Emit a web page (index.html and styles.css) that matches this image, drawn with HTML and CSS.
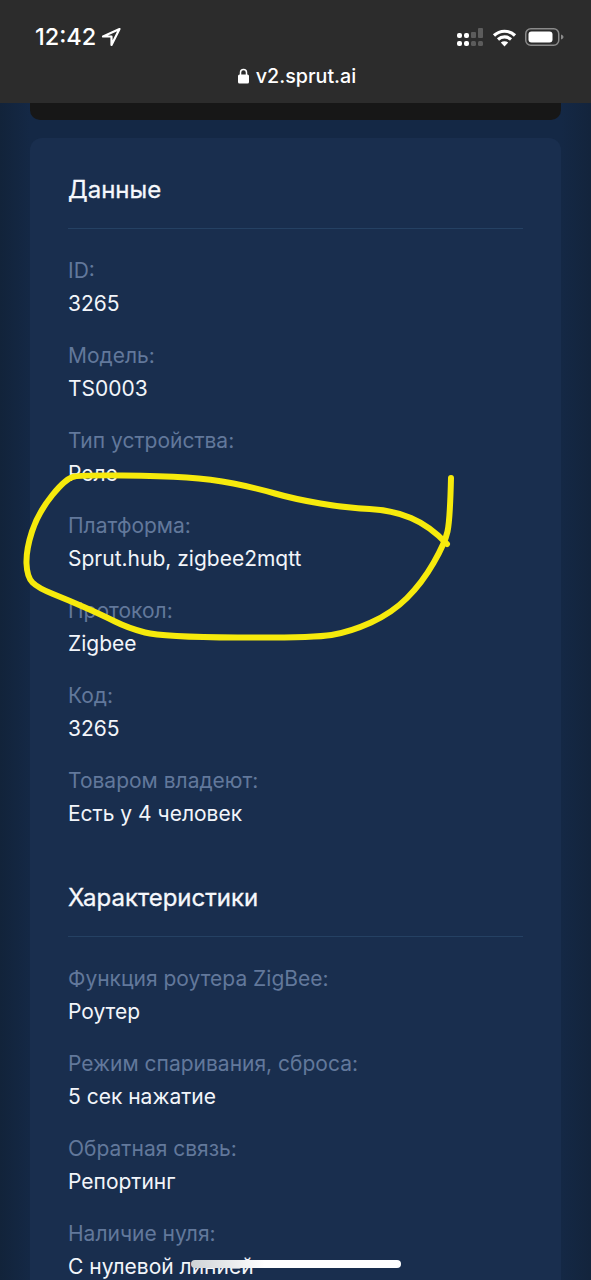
FILE: index.html
```html
<!DOCTYPE html>
<html lang="ru">
<head>
<meta charset="utf-8">
<title>v2.sprut.ai</title>
<link rel="stylesheet" href="styles.css">
</head>
<body>
<header class="chrome">
  <div class="status">
    <div class="clock">
      <span class="time">12:42</span>
      <svg class="arrow" width="20" height="20" viewBox="0 0 20 20"><path d="M18.500 2 2 9.500h8.500V18z" fill="none" stroke="#fff" stroke-width="2.200" stroke-linejoin="round"/></svg>
    </div>
    <div class="indicators">
      <svg width="27" height="20" viewBox="0 0 27 20">
        <g fill="#fff"><rect x="0" y="6" width="5" height="5" rx="2"/><rect x="7" y="6" width="5" height="5" rx="2"/><rect x="0" y="14" width="5" height="5" rx="2"/><rect x="7" y="14" width="5" height="5" rx="2"/></g>
        <g fill="#5c5c5c"><rect x="14" y="5" width="5" height="6" rx="1"/><rect x="21" y="1" width="5" height="10" rx="1"/><rect x="14" y="14" width="5" height="5" rx="1.500"/><rect x="21" y="14" width="5" height="5" rx="1.500"/></g>
      </svg>
      <svg width="25" height="19" viewBox="0 0 25 19">
        <path d="M2 7.500C8 1.800 17 1.800 23 7.500M6 11.500c3.800-3.400 9.200-3.400 13 0" fill="none" stroke="#fff" stroke-width="3.200"/>
        <path d="M8.800 14.500c2.200-1.700 5.200-1.700 7.400 0l-3.700 4z" fill="#fff"/>
      </svg>
      <svg width="39" height="18" viewBox="0 0 39 18">
        <rect x=".75" y=".75" width="33" height="16.500" rx="5" fill="none" stroke="#8a8a8a" stroke-width="1.500"/>
        <rect x="3.500" y="3.500" width="24" height="11" rx="3" fill="#fff"/>
        <path d="M36 6.500c1.500.5 2.500 1.500 2.500 2.500s-1 2-2.500 2.500z" fill="#8a8a8a"/>
      </svg>
    </div>
  </div>
  <div class="address">
    <svg width="11" height="16" viewBox="0 0 11 16"><path d="M2.500 7V4.500a3 3 0 0 1 6 0V7" fill="none" stroke="#fff" stroke-width="1.500"/><rect x="0" y="6.500" width="11" height="9" rx="1.500" fill="#fff"/></svg>
    <span class="url">v2.sprut.ai</span>
  </div>
</header>

<main class="page">
  <div class="media-card"></div>
  <section class="card">
    <h2 class="heading">Данные</h2>
    <dl class="facts">
      <div class="fact"><dt>ID:</dt><dd>3265</dd></div>
      <div class="fact"><dt>Модель:</dt><dd>TS0003</dd></div>
      <div class="fact"><dt>Тип устройства:</dt><dd>Реле</dd></div>
      <div class="fact"><dt>Платформа:</dt><dd>Sprut.hub, zigbee2mqtt</dd></div>
      <div class="fact"><dt>Протокол:</dt><dd>Zigbee</dd></div>
      <div class="fact"><dt>Код:</dt><dd>3265</dd></div>
      <div class="fact"><dt>Товаром владеют:</dt><dd>Есть у 4 человек</dd></div>
    </dl>
    <h2 class="heading heading-next">Характеристики</h2>
    <dl class="facts">
      <div class="fact"><dt>Функция роутера ZigBee:</dt><dd>Роутер</dd></div>
      <div class="fact"><dt>Режим спаривания, сброса:</dt><dd>5 сек нажатие</dd></div>
      <div class="fact"><dt>Обратная связь:</dt><dd>Репортинг</dd></div>
      <div class="fact"><dt>Наличие нуля:</dt><dd>С нулевой линией</dd></div>
    </dl>
  </section>
</main>

<svg class="scribble" width="591" height="1280" viewBox="0 0 591 1280">
  <path d="M451 478Q450 520 447.500 531.500Q445 543 433.500 563Q422 583 407 598Q392 613 371 622.500Q350 632 331.500 635Q313 638 237.500 637.500Q162 637 145 632.500Q128 628 115 621.500Q102 615 85 607.500Q68 600 53 594Q38 588 32.500 582.500Q27 577 26.500 563.500Q26 550 32 531.500Q38 513 52 495.500Q66 478 74.500 476.500Q83 475 122.500 475.500Q162 476 186.500 477.500Q211 479 233.500 483.500Q256 488 275 493.500Q294 499 320.500 503.500Q347 508 369.500 509Q392 510 411 518Q430 526 447 544" fill="none" stroke="#f6ea0c" stroke-width="6" stroke-linecap="round" stroke-linejoin="round"/>
</svg>
<div class="home-indicator"></div>
</body>
</html>
```

FILE: styles.css
```css
* { box-sizing: border-box; }
html, body { margin: 0; padding: 0; height: 100vh; overflow: hidden; }
body {
  font-family: Inter, "Liberation Sans", sans-serif;
  background: linear-gradient(90deg, #12233a 0, #142845 30px, #142845 561px, #13243c 100%);
  color: #f2f5fa;
}
.chrome { height: 103px; background: #2c2c2c; color: #fff; display: flex; flex-direction: column; }
.status { height: 57px; padding: 17px 27px 0 35px; display: flex; justify-content: space-between; align-items: center; }
.clock { display: flex; align-items: center; gap: 5px; }
.time { font-size: 23.500px; font-weight: 500; line-height: 28px; }
.indicators { display: flex; align-items: center; gap: 8px; }
.indicators svg { display: block; }
.address { display: flex; justify-content: center; align-items: center; gap: 7px; height: 38px; padding-left: 3px; }
.url { font-size: 19.700px; font-weight: 500; line-height: 24px; }
.page { padding: 0 30px; display: flex; flex-direction: column; gap: 18px; }
.media-card { height: 17px; background: #171717; border-radius: 0 0 10px 10px; }
.card { background: #192e4e; border-radius: 12px; padding: 36px 38px 0; }
.heading { margin: 0; font-size: 24px; font-weight: 400; line-height: 32px; padding-bottom: 22px; border-bottom: 1px solid #254163; color: #f6f8fc; -webkit-text-stroke: 0.3px #f6f8fc; }
.heading-next { margin-top: 52px; }
.facts { margin: 25px 0 0; }
.fact { margin-bottom: 19px; }
dt { font-size: 21px; line-height: 33px; color: #62789b; }
dd { margin: 0; font-size: 21px; line-height: 33px; color: #f2f5fa; }
.scribble { position: absolute; left: 0; top: 0; pointer-events: none; }
.home-indicator { position: absolute; left: 191px; top: 1260px; width: 210px; height: 8px; border-radius: 4px; background: linear-gradient(90deg, #cfd3d6, #fff 35%); }
```
